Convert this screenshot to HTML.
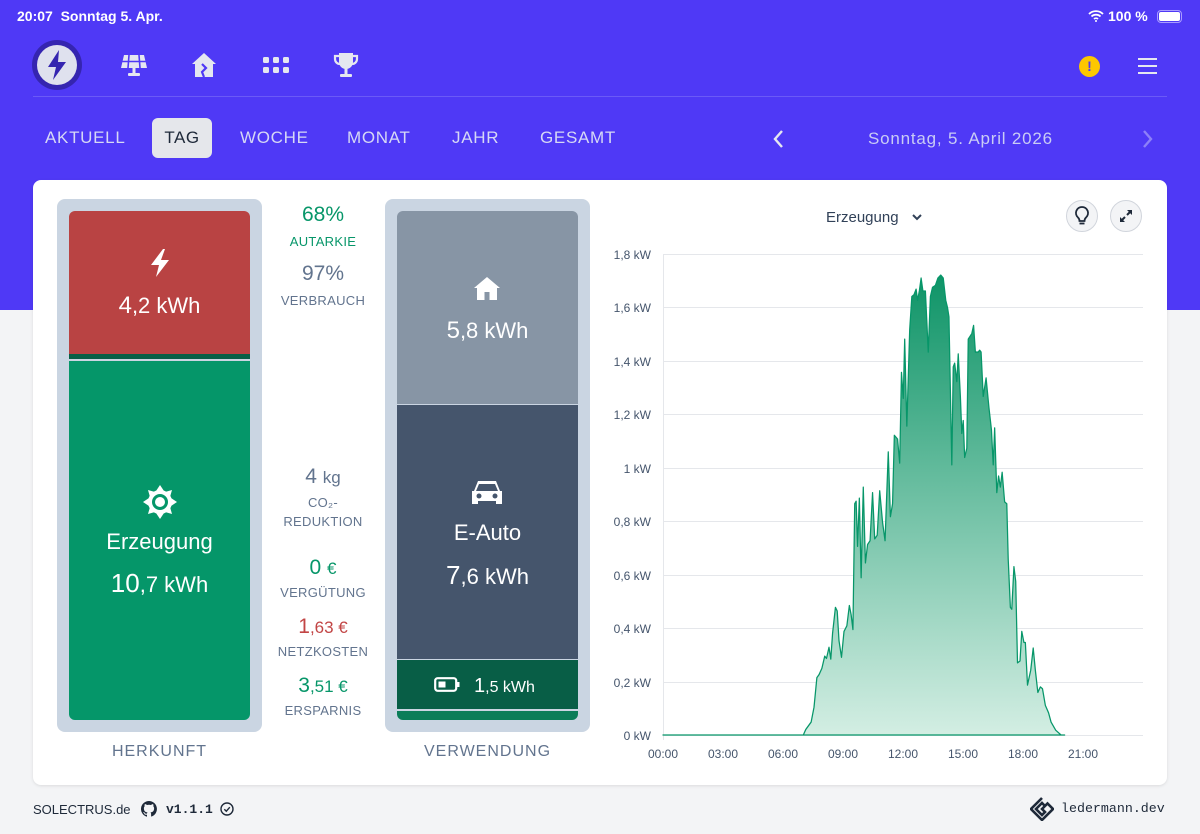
<!DOCTYPE html>
<html><head><meta charset="utf-8">
<style>
*{margin:0;padding:0;box-sizing:border-box}
body{width:1200px;height:834px;position:relative;overflow:hidden;background:#f3f4f6;font-family:"Liberation Sans",sans-serif}
.a{position:absolute}
.top{left:0;top:0;width:1200px;height:310px;background:#4f39f6}
.c{text-align:center}
.nav{font-size:17px;letter-spacing:.7px;color:#d6d8f5;top:128px}
.big{color:#fff;font-size:22px}
.mid{width:140px;left:253px;text-align:center}
.mv{font-size:21px}
.ml{font-size:13px;color:#62748e;letter-spacing:.3px}
.yl{font-size:12px;color:#45556c;right:549px;text-align:right;width:60px}
.xl{font-size:12px;color:#45556c;width:50px;text-align:center;top:747px}
</style></head><body>
<div class="a top"></div>
<div class="a" style="left:17px;top:8px;color:#fff;font-size:14px;font-weight:bold">20:07&nbsp;&nbsp;Sonntag 5. Apr.</div>
<div class="a" style="left:1108px;top:8px;color:#fff;font-size:14px;font-weight:bold">100 %</div>
<svg class="a" style="left:1088px;top:10px" width="16" height="12" viewBox="0 0 16 12"><path d="M1 4a10 10 0 0 1 14 0M3.5 6.5a6.5 6.5 0 0 1 9 0M6 9a3 3 0 0 1 4 0" stroke="#fff" stroke-width="1.8" fill="none"/><circle cx="8" cy="11" r="1" fill="#fff"/></svg>
<div class="a" style="left:1157px;top:10px;width:25px;height:13px;border:1px solid #a99cff;border-radius:4px;padding:1px"><div style="width:100%;height:100%;background:#fff;border-radius:2px"></div></div>
<svg class="a" style="left:32px;top:40px" width="50" height="50" viewBox="0 0 50 50"><circle cx="25" cy="25" r="25" fill="#3525b0"/><circle cx="25" cy="25" r="20" fill="#dfe1ee"/><path d="M27 10 L16 27 L24 27 L21 40 L34 22 L26 22 Z" fill="#3525b0"/></svg>
<svg class="a" style="left:120px;top:53px" width="28" height="26" viewBox="0 0 28 26"><path d="M4 2h20l3 13H1z" fill="#e5e7f0"/><path d="M9 2L8 15M19 2l1 13M2.5 8.5h23" stroke="#4f39f6" stroke-width="1.6"/><rect x="12.5" y="15" width="3" height="6" fill="#e5e7f0"/><rect x="8" y="20" width="12" height="3" rx="1" fill="#e5e7f0"/></svg>
<svg class="a" style="left:191px;top:52px" width="26" height="26" viewBox="0 0 26 26"><path d="M13 1L1 12h3v13h18V12h3z" fill="#e5e7f0"/><path d="M11 12l4 4-4 4 2 5" stroke="#4f39f6" stroke-width="2.2" fill="none"/></svg>
<svg class="a" style="left:263px;top:57px" width="26" height="18" viewBox="0 0 26 18"><g fill="#e5e7f0"><rect x="0" y="0" width="6" height="6" rx="1.5"/><rect x="10" y="0" width="6" height="6" rx="1.5"/><rect x="20" y="0" width="6" height="6" rx="1.5"/><rect x="0" y="10" width="6" height="6" rx="1.5"/><rect x="10" y="10" width="6" height="6" rx="1.5"/><rect x="20" y="10" width="6" height="6" rx="1.5"/></g></svg>
<svg class="a" style="left:333px;top:52px" width="26" height="27" viewBox="0 0 26 27"><path d="M6 1h14v9a7 7 0 0 1-14 0z" fill="#e5e7f0"/><path d="M6 4H2v3a5 5 0 0 0 5 5M20 4h4v3a5 5 0 0 1-5 5" stroke="#e5e7f0" stroke-width="2.2" fill="none"/><rect x="11.5" y="16" width="3" height="6" fill="#e5e7f0"/><rect x="7" y="22" width="12" height="3" rx="1" fill="#e5e7f0"/></svg>
<div class="a" style="left:1079px;top:56px;width:21px;height:21px;border-radius:50%;background:#fdc700;color:#4f39f6;font-weight:bold;font-size:14px;text-align:center;line-height:21px">!</div>
<div class="a" style="left:1138px;top:58px;width:19px;height:2px;background:#e5e7f0;box-shadow:0 7px 0 #e5e7f0,0 14px 0 #e5e7f0"></div>
<div class="a" style="left:33px;top:96px;width:1134px;height:1px;background:#6b5af7"></div>
<div class="a nav" style="left:45px">AKTUELL</div>
<div class="a" style="left:152px;top:118px;width:60px;height:40px;background:#e5e7eb;border-radius:6px;color:#1e2939;font-size:17px;text-align:center;line-height:40px;letter-spacing:.5px">TAG</div>
<div class="a nav" style="left:240px">WOCHE</div>
<div class="a nav" style="left:347px">MONAT</div>
<div class="a nav" style="left:452px">JAHR</div>
<div class="a nav" style="left:540px">GESAMT</div>
<svg class="a" style="left:772px;top:129px" width="12" height="20" viewBox="0 0 12 20"><path d="M10 2L3 10l7 8" stroke="#e5e7f0" stroke-width="2.4" fill="none"/></svg>
<div class="a" style="left:868px;top:129px;font-size:17px;color:#c9ccf5;letter-spacing:.8px">Sonntag, 5. April 2026</div>
<svg class="a" style="left:1142px;top:129px" width="12" height="20" viewBox="0 0 12 20"><path d="M2 2l7 8-7 8" stroke="#8d80f8" stroke-width="2.4" fill="none"/></svg>
<div class="a" style="left:33px;top:180px;width:1134px;height:605px;background:#fff;border-radius:8px;box-shadow:0 1px 3px rgba(0,0,0,.1)"></div>
<div class="a" style="left:57px;top:199px;width:205px;height:533px;background:#cad5e2;border-radius:8px"></div>
<div class="a" style="left:69px;top:211px;width:181px;height:143px;background:#b94343;border-radius:6px 6px 0 0"></div>
<div class="a" style="left:69px;top:354px;width:181px;height:5px;background:#065f46"></div>
<div class="a" style="left:69px;top:361px;width:181px;height:359px;background:#059669;border-radius:0 0 6px 6px"></div>
<svg class="a" style="left:148px;top:248px" width="24" height="30" viewBox="0 0 24 30"><path d="M15 1L3 17h8l-3 12 13-17h-8l4-11z" fill="#fff"/></svg>
<div class="a big c" style="left:69px;top:292px;width:181px"><span style="font-size:24px">4</span>,2 kWh</div>
<svg class="a" style="left:142px;top:484px" width="36" height="36" viewBox="-18 -18 36 36"><g fill="#fff"><circle r="12"/><path d="M0-17l4 6h-8zM0 17l4-6h-8zM-17 0l6 4v-8zM17 0l-6 4v-8zM-12-12l7 2-5 5zM12 12l-7-2 5-5zM12-12l-2 7-5-5zM-12 12l2-7 5 5z"/></g><circle r="8" fill="#059669"/><circle r="5" fill="#fff"/></svg>
<div class="a c" style="left:69px;top:529px;width:181px;color:#fff;font-size:22px">Erzeugung</div>
<div class="a big c" style="left:69px;top:568px;width:181px"><span style="font-size:26px">10</span>,7 kWh</div>
<div class="a c" style="left:57px;top:743px;width:205px;font-size:16px;color:#62748e;letter-spacing:1px">HERKUNFT</div>
<div class="a mid mv" style="top:203px;color:#079669">68%</div>
<div class="a mid ml" style="top:234px;color:#079669">AUTARKIE</div>
<div class="a mid mv" style="top:262px;color:#62748e">97%</div>
<div class="a mid ml" style="top:293px">VERBRAUCH</div>
<div class="a mid mv" style="top:465px;color:#62748e">4 <span style="font-size:17px">kg</span></div>
<div class="a mid ml" style="top:495px">CO₂-</div>
<div class="a mid ml" style="top:514px">REDUKTION</div>
<div class="a mid mv" style="top:556px;color:#079669">0 <span style="font-size:17px">€</span></div>
<div class="a mid ml" style="top:585px">VERGÜTUNG</div>
<div class="a mid mv" style="top:615px;color:#c24545">1<span style="font-size:17px">,63 €</span></div>
<div class="a mid ml" style="top:644px">NETZKOSTEN</div>
<div class="a mid mv" style="top:674px;color:#079669">3<span style="font-size:17px">,51 €</span></div>
<div class="a mid ml" style="top:703px">ERSPARNIS</div>
<div class="a" style="left:385px;top:199px;width:205px;height:533px;background:#cad5e2;border-radius:8px"></div>
<div class="a" style="left:397px;top:211px;width:181px;height:193px;background:#8795a5;border-radius:6px 6px 0 0"></div>
<div class="a" style="left:397px;top:405px;width:181px;height:254px;background:#45556c"></div>
<div class="a" style="left:397px;top:660px;width:181px;height:49px;background:#085e46"></div>
<div class="a" style="left:397px;top:711px;width:181px;height:9px;background:#0b7d58;border-radius:0 0 6px 6px"></div>
<svg class="a" style="left:473px;top:276px" width="28" height="26" viewBox="0 0 28 26"><path d="M14 1L1 12h3v12h20V12h3z" fill="#fff"/><rect x="11.5" y="16" width="5" height="8" fill="#8795a5"/></svg>
<div class="a big c" style="left:397px;top:317px;width:181px"><span style="font-size:24px">5</span>,8 kWh</div>
<svg class="a" style="left:470px;top:478px" width="34" height="30" viewBox="0 0 34 30"><path d="M8 3h18l4 10h2v13h-6v-3H8v3H2V13h2z" fill="#fff"/><path d="M9 6h16l3 7H6z" fill="#45556c"/><circle cx="9" cy="18" r="2.5" fill="#45556c"/><circle cx="25" cy="18" r="2.5" fill="#45556c"/></svg>
<div class="a c" style="left:397px;top:520px;width:181px;color:#fff;font-size:22px">E-Auto</div>
<div class="a big c" style="left:397px;top:560px;width:181px"><span style="font-size:26px">7</span>,6 kWh</div>
<svg class="a" style="left:434px;top:677px" width="26" height="15" viewBox="0 0 26 15"><rect x="1.2" y="1.2" width="21" height="12.6" rx="2.5" stroke="#fff" stroke-width="2.2" fill="none"/><rect x="4.5" y="4.5" width="7" height="6" fill="#fff"/><rect x="23" y="5" width="2.5" height="5" fill="#fff"/></svg>
<div class="a" style="left:474px;top:675px;color:#fff;font-size:16px"><span style="font-size:20px">1</span>,5 kWh</div>
<div class="a c" style="left:385px;top:743px;width:205px;font-size:16px;color:#62748e;letter-spacing:1px">VERWENDUNG</div>
<div class="a" style="left:826px;top:209px;font-size:15px;color:#314158">Erzeugung</div>
<svg class="a" style="left:911px;top:213px" width="12" height="9" viewBox="0 0 12 9"><path d="M2 2l4 4 4-4" stroke="#314158" stroke-width="2" fill="none"/></svg>
<div class="a" style="left:1066px;top:200px;width:32px;height:32px;border-radius:50%;background:#f3f4f6;border:1px solid #d1d5dc"></div>
<svg class="a" style="left:1072px;top:205px" width="20" height="22" viewBox="0 0 20 22"><path d="M10 2a6 6 0 0 0-4 10.5c1 1 1.5 2 1.5 3.5h5c0-1.5.5-2.5 1.5-3.5A6 6 0 0 0 10 2z" stroke="#1e2939" stroke-width="1.8" fill="none"/><path d="M7.5 18.5h5" stroke="#1e2939" stroke-width="1.8"/></svg>
<div class="a" style="left:1110px;top:200px;width:32px;height:32px;border-radius:50%;background:#f3f4f6;border:1px solid #d1d5dc"></div>
<svg class="a" style="left:1118px;top:208px" width="16" height="16" viewBox="0 0 16 16"><path d="M9 2h5v5zM7 14H2V9z" fill="#1e2939"/><path d="M12 4L9 7M4 12l3-3" stroke="#1e2939" stroke-width="2"/></svg>
<svg class="a" style="left:0;top:0" width="1200" height="834">
<defs><linearGradient id="g" gradientUnits="userSpaceOnUse" x1="0" y1="232" x2="0" y2="1475"><stop offset="0" stop-color="#0e9467"/><stop offset="1" stop-color="#d3eee3"/></linearGradient></defs>
<g stroke="#e5e7eb" stroke-width="1">
<line x1="663" y1="254.5" x2="1143" y2="254.5"/><line x1="663" y1="307.5" x2="1143" y2="307.5"/><line x1="663" y1="361.5" x2="1143" y2="361.5"/><line x1="663" y1="414.5" x2="1143" y2="414.5"/><line x1="663" y1="468.5" x2="1143" y2="468.5"/><line x1="663" y1="521.5" x2="1143" y2="521.5"/><line x1="663" y1="575.5" x2="1143" y2="575.5"/><line x1="663" y1="628.5" x2="1143" y2="628.5"/><line x1="663" y1="682.5" x2="1143" y2="682.5"/><line x1="663" y1="735.5" x2="1143" y2="735.5"/><line x1="663.5" y1="254" x2="663.5" y2="740"/>
</g>
<g transform="translate(663,735) scale(0.357,0.37) translate(-175,-1475)">
<path fill="url(#g)" stroke="#079669" stroke-width="3.5" stroke-linejoin="round" d="M175,1475 L568,1475 L575,1460 L590,1440 L598,1400 L606,1320 L612,1312 L620,1295 L628,1262 L633,1268 L640,1238 L645,1270 L650,1200 L658,1130 L663,1140 L668,1220 L675,1265 L682,1195 L690,1180 L697,1125 L702,1150 L707,1190 L712,850 L716,843 L720,965 L725,835 L730,1050 L736,805 L742,1010 L748,960 L755,950 L762,820 L768,945 L775,935 L782,815 L790,900 L797,950 L806,710 L812,885 L818,850 L823,665 L832,675 L838,740 L843,495 L848,565 L852,405 L858,640 L866,380 L872,290 L878,285 L884,270 L888,300 L893,275 L898,240 L903,275 L910,275 L918,440 L924,290 L930,265 L938,260 L945,240 L953,232 L960,240 L967,300 L972,320 L976,345 L984,745 L988,480 L992,470 L998,520 L1002,445 L1008,560 L1012,660 L1016,625 L1020,725 L1026,700 L1030,405 L1040,390 L1045,368 L1050,440 L1058,440 L1062,435 L1066,440 L1072,560 L1080,510 L1088,590 L1095,650 L1100,745 L1104,645 L1110,820 L1115,775 L1120,805 L1125,765 L1132,845 L1138,850 L1142,1000 L1148,1130 L1152,1135 L1158,1020 L1163,1060 L1168,1280 L1175,1275 L1180,1195 L1186,1225 L1190,1225 L1196,1340 L1205,1300 L1212,1240 L1218,1300 L1225,1360 L1232,1345 L1238,1350 L1246,1395 L1255,1415 L1262,1440 L1275,1462 L1290,1475 L1300,1475 Z"/>
</g>
</svg>
<div class="a yl" style="top:248px">1,8 kW</div>
<div class="a yl" style="top:301px">1,6 kW</div>
<div class="a yl" style="top:355px">1,4 kW</div>
<div class="a yl" style="top:408px">1,2 kW</div>
<div class="a yl" style="top:462px">1 kW</div>
<div class="a yl" style="top:515px">0,8 kW</div>
<div class="a yl" style="top:569px">0,6 kW</div>
<div class="a yl" style="top:622px">0,4 kW</div>
<div class="a yl" style="top:676px">0,2 kW</div>
<div class="a yl" style="top:729px">0 kW</div>
<div class="a xl" style="left:638px">00:00</div>
<div class="a xl" style="left:698px">03:00</div>
<div class="a xl" style="left:758px">06:00</div>
<div class="a xl" style="left:818px">09:00</div>
<div class="a xl" style="left:878px">12:00</div>
<div class="a xl" style="left:938px">15:00</div>
<div class="a xl" style="left:998px">18:00</div>
<div class="a xl" style="left:1058px">21:00</div>
<div class="a" style="left:33px;top:802px;font-size:13px;color:#1e2939">SOLECTRUS.de</div>
<svg class="a" style="left:141px;top:801px" width="16" height="16" viewBox="0 0 16 16"><path fill="#1e2939" d="M8 0a8 8 0 0 0-2.5 15.6c.4 0 .5-.2.5-.4v-1.5c-2.2.5-2.7-1-2.7-1-.4-.9-.9-1.2-.9-1.2-.7-.5.1-.5.1-.5.8.1 1.2.8 1.2.8.7 1.3 1.9.9 2.3.7.1-.5.3-.9.5-1.1-1.8-.2-3.6-.9-3.6-4 0-.9.3-1.6.8-2.1-.1-.2-.4-1 .1-2.1 0 0 .7-.2 2.2.8a7.5 7.5 0 0 1 4 0c1.5-1 2.2-.8 2.2-.8.4 1.1.2 1.900.1 2.1.5.6.8 1.3.8 2.1 0 3.1-1.9 3.8-3.6 4 .3.3.6.8.6 1.5v2.2c0 .2.1.5.6.4A8 8 0 0 0 8 0z"/></svg>
<div class="a" style="left:166px;top:802px;font-size:13px;color:#1e2939;font-family:'Liberation Mono',monospace;font-weight:bold">v1.1.1</div>
<svg class="a" style="left:220px;top:802px" width="14" height="14" viewBox="0 0 14 14"><circle cx="7" cy="7" r="6" stroke="#1e2939" stroke-width="1.4" fill="none"/><path d="M4.3 7.2l2 2 3.5-4" stroke="#1e2939" stroke-width="1.4" fill="none"/></svg>
<svg class="a" style="left:1030px;top:797px" width="24" height="24" viewBox="0 0 24 24"><path d="M12 1L1 12l11 11 11-11-5.5-5.5L12 12l3 3-3 3-6-6 6-6 2.5 2.5" stroke="#1e2939" stroke-width="2.6" fill="none"/></svg>
<div class="a" style="left:1061px;top:801px;font-size:13.3px;color:#1e2939;font-family:'Liberation Mono',monospace">ledermann.dev</div>
</body></html>
